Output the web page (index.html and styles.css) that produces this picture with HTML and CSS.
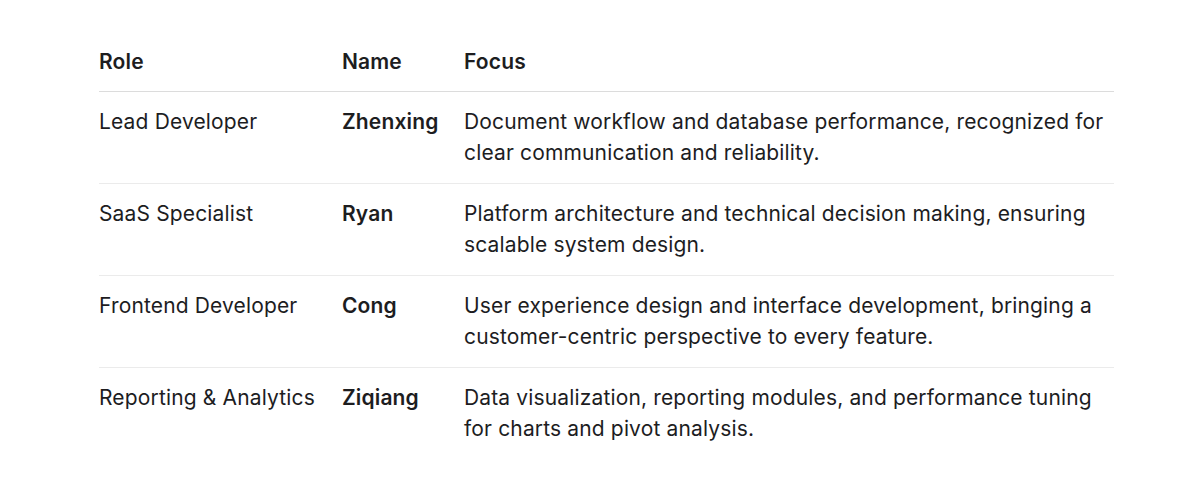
FILE: index.html
```html
<!DOCTYPE html>
<html lang="en">
<head>
<meta charset="utf-8">
<title>Team</title>
<link rel="stylesheet" href="styles.css">
</head>
<body>
<main class="page">
  <table class="team">
    <thead>
      <tr>
        <th class="col-role">Role</th>
        <th class="col-name">Name</th>
        <th class="col-focus">Focus</th>
      </tr>
    </thead>
    <tbody>
      <tr>
        <td>Lead Developer</td>
        <td class="name">Zhenxing</td>
        <td>Document workflow and database performance, recognized for clear communication and reliability.</td>
      </tr>
      <tr>
        <td>SaaS Specialist</td>
        <td class="name">Ryan</td>
        <td>Platform architecture and technical decision making, ensuring scalable system design.</td>
      </tr>
      <tr>
        <td>Frontend Developer</td>
        <td class="name">Cong</td>
        <td>User experience design and interface development, bringing a customer-centric perspective to every feature.</td>
      </tr>
      <tr class="last">
        <td>Reporting &amp; Analytics</td>
        <td class="name">Ziqiang</td>
        <td>Data visualization, reporting modules, and performance tuning for charts and pivot analysis.</td>
      </tr>
    </tbody>
  </table>
</main>
</body>
</html>
```

FILE: styles.css
```css
html, body {
  margin: 0;
  padding: 0;
  background: #ffffff;
}

body {
  font-family: Inter, "Liberation Sans", sans-serif;
  color: #1d1d1f;
  font-size: 21px;
  letter-spacing: 0.15px;
  line-height: 31px;
}

.page {
  padding: 30px 86px 0 99px;
}

.team {
  width: 1015px;
  border-collapse: collapse;
  table-layout: fixed;
}

.col-role { width: 231px; }
.col-name { width: 110px; }

.team th,
.team td {
  text-align: left;
  vertical-align: top;
  padding: 14px 12px 15px 0;
}

.team th:last-child,
.team td:last-child {
  padding-right: 0;
}

.team th {
  font-weight: 600;
  padding-top: 16px;
  padding-bottom: 14px;
  border-bottom: 1px solid #dcdcdc;
}

.team td {
  font-weight: 400;
  border-bottom: 1px solid #ebebeb;
}

.team tr.last td {
  border-bottom: none;
}

.team td.name {
  font-weight: 600;
}
```
